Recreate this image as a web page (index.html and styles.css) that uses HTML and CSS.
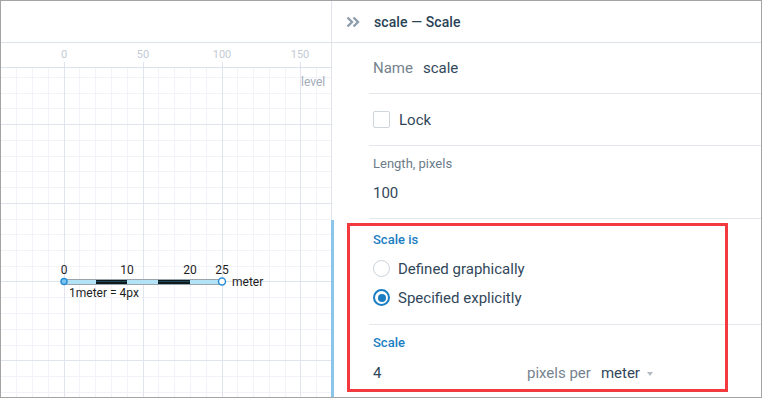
FILE: index.html
```html
<!DOCTYPE html>
<html>
<head>
<meta charset="utf-8">
<link rel="stylesheet" href="styles.css">
</head>
<body>
<div class="frame">
  <div class="canvas">
    <div class="canvas-top"></div>
    <svg class="plan" width="330" height="354" viewBox="1 43 330 354" xmlns="http://www.w3.org/2000/svg">
      <rect x="1" y="43" width="330" height="354" fill="#fff"/>
      <g shape-rendering="crispEdges" fill="none">
        <path stroke="#f1f3f8" d="M16.5 68V397M32.5 68V397M48.5 68V397M79.5 68V397M95.5 68V397M111.5 68V397M127.5 68V397M158.5 68V397M174.5 68V397M190.5 68V397M206.5 68V397M237.5 68V397M253.5 68V397M269.5 68V397M285.5 68V397M316.5 68V397
          M1 77.5H331M1 93.5H331M1 108.5H331M1 140.5H331M1 156.5H331M1 171.5H331M1 187.5H331M1 219.5H331M1 234.5H331M1 250.5H331M1 266.5H331M1 297.5H331M1 313.5H331M1 329.5H331M1 345.5H331M1 376.5H331M1 392.5H331"/>
        <path stroke="#dfe4ee" d="M64.5 62V397M143.5 62V397M222.5 62V397M300.5 62V397M1 124.5H331M1 203.5H331M1 281.5H331M1 360.5H331"/>
        <path stroke="#dce2ec" d="M1 67.5H331"/>
      </g>
      <g class="ruler-labels">
        <text x="64" y="58">0</text>
        <text x="143" y="58">50</text>
        <text x="222" y="58">100</text>
        <text x="300" y="58">150</text>
      </g>
      <text class="level" x="301" y="86">level</text>
      <g class="scalebar">
        <rect x="64" y="279" width="158" height="5" fill="#b3e2f6" stroke="#9aa4ac" stroke-width="1" shape-rendering="crispEdges"/>
        <rect x="96" y="279.5" width="31" height="4" fill="#0f1a1e" shape-rendering="crispEdges"/>
        <rect x="158" y="279.5" width="32" height="4" fill="#0f1a1e" shape-rendering="crispEdges"/>
        <rect x="96" y="281" width="31" height="1" fill="#1c4b5c" shape-rendering="crispEdges"/>
        <rect x="158" y="281" width="32" height="1" fill="#1c4b5c" shape-rendering="crispEdges"/>
        <circle cx="64" cy="281.5" r="3" fill="#7cc4ee" stroke="#2b8ed6" stroke-width="1.5"/>
        <circle cx="222" cy="281.5" r="3.5" fill="#fff" stroke="#2b8ed6" stroke-width="1.5"/>
      </g>
      <g class="bar-labels">
        <text x="64" y="274" text-anchor="middle">0</text>
        <text x="127" y="274" text-anchor="middle">10</text>
        <text x="190" y="274" text-anchor="middle">20</text>
        <text x="222" y="274" text-anchor="middle">25</text>
        <text x="232" y="286">meter</text>
        <text x="69" y="297">1meter = 4px</text>
      </g>
    </svg>
  </div>
  <div class="panel">
    <div class="header">
      <svg class="collapse" width="14" height="12" viewBox="0 0 14 12"><path d="M1.5 1.5l4.5 4.5-4.5 4.5M7.5 1.5l4.5 4.5-4.5 4.5" fill="none" stroke="#8e9caa" stroke-width="2.4"/></svg>
      <span class="title">scale — Scale</span>
    </div>
    <div class="row name-row">
      <span class="muted">Name</span><span class="value">scale</span>
    </div>
    <div class="row lock-row">
      <span class="checkbox"></span><span class="value">Lock</span>
    </div>
    <div class="row field-row">
      <div class="label">Length, pixels</div>
      <div class="value">100</div>
    </div>
    <div class="group">
      <div class="row radio-section">
        <div class="label accent">Scale is</div>
        <div class="radio-line"><span class="radio"></span><span class="value">Defined graphically</span></div>
        <div class="radio-line"><span class="radio checked"></span><span class="value">Specified explicitly</span></div>
      </div>
      <div class="row field-row last">
        <div class="label accent">Scale</div>
        <div class="scale-line">
          <span class="value num">4</span>
          <span class="muted per">pixels per</span>
          <span class="value">meter</span>
          <span class="caret"></span>
        </div>
      </div>
    </div>
  </div>
  <div class="highlight"></div>
</div>
</body>
</html>
```
FILE: styles.css
```css
* { box-sizing: border-box; }
html, body { margin: 0; padding: 0; background: #fff; }
body { font-family: Roboto, "Liberation Sans", sans-serif; }

.frame {
  position: relative;
  width: 762px;
  height: 398px;
  border: 1px solid #a4a4a4;
  display: flex;
  overflow: hidden;
}

.canvas {
  width: 330px;
  display: flex;
  flex-direction: column;
}
.canvas-top {
  height: 42px;
  border-bottom: 1px solid #dce2ec;
  background: #fff;
}
.plan { display: block; }
.ruler-labels text {
  font-family: Roboto, "Liberation Sans", sans-serif;
  font-size: 11px;
  fill: #c3cbd6;
  text-anchor: middle;
}
.level {
  font-family: Roboto, "Liberation Sans", sans-serif;
  font-size: 12px;
  fill: #a3acb7;
}
.bar-labels text {
  font-family: Roboto, "Liberation Sans", sans-serif;
  font-size: 12px;
  fill: #1e1e1e;
}

.panel {
  flex: 1;
  border-left: 1px solid #e1e5eb;
  display: flex;
  flex-direction: column;
  color: #33495c;
}
.header {
  height: 42px;
  border-bottom: 1px solid #dde2e8;
  display: flex;
  align-items: center;
  padding-left: 14px;
}
.collapse { display: block; margin-top: 1px; }
.title {
  margin-left: 14px;
  font-size: 14px;
  font-weight: 500;
  color: #2a4356;
  letter-spacing: 0.1px;
}

.row {
  margin-left: 37px;
  padding-left: 4px;
  border-bottom: 1px solid #e4e8ed;
}
.value { font-size: 15px; color: #31475a; line-height: 20px; }
.muted { font-size: 15px; color: #76838f; line-height: 20px; }
.label { font-size: 13px; line-height: 16px; color: #6c7c8a; }
.label.accent { color: #1b7ec3; font-weight: 500; }

.name-row {
  height: 51px;
  display: flex;
  align-items: center;
  gap: 10px;
}
.lock-row {
  height: 52px;
  display: flex;
  align-items: center;
  gap: 9px;
}
.checkbox {
  width: 17px;
  height: 17px;
  border: 1px solid #cfd5dc;
  border-radius: 2px;
  background: #fff;
}
.field-row {
  height: 73px;
  padding-top: 10px;
}
.field-row .value { margin-top: 11px; }

.group {
  flex: 1;
  margin-left: -1px;
  margin-top: 1px;
  border-left: 3px solid #8cc5e9;
}
.group .row { margin-left: 35px; }
.radio-section {
  height: 105px;
  padding-top: 12px;
}
.radio-line {
  height: 29px;
  display: flex;
  align-items: center;
  gap: 8px;
}
.radio-section .label { margin-bottom: 6px; }
.radio {
  width: 17px;
  height: 17px;
  border-radius: 50%;
  border: 1px solid #c9d1d9;
  background: #fff;
  position: relative;
}
.radio.checked { border: 2px solid #1b7ec3; }
.radio.checked::after {
  content: "";
  position: absolute;
  left: 2.5px;
  top: 2.5px;
  width: 8px;
  height: 8px;
  border-radius: 50%;
  background: #1b7ec3;
}
.field-row.last {
  border-bottom: none;
  height: auto;
  padding-top: 10px;
}
.field-row.last .scale-line { margin-top: 12px; display: flex; align-items: center; }
.field-row.last .scale-line .value { margin-top: 0; }
.num { width: 154px; }
.per { margin-right: 10px; }
.caret {
  margin-left: 7px;
  margin-top: 2px;
  width: 0;
  height: 0;
  border-left: 3px solid transparent;
  border-right: 3px solid transparent;
  border-top: 4px solid #b3bcc4;
}

.highlight {
  position: absolute;
  left: 346px;
  top: 222px;
  width: 381px;
  height: 169px;
  border: 3px solid #f23a3f;
  pointer-events: none;
}
```
